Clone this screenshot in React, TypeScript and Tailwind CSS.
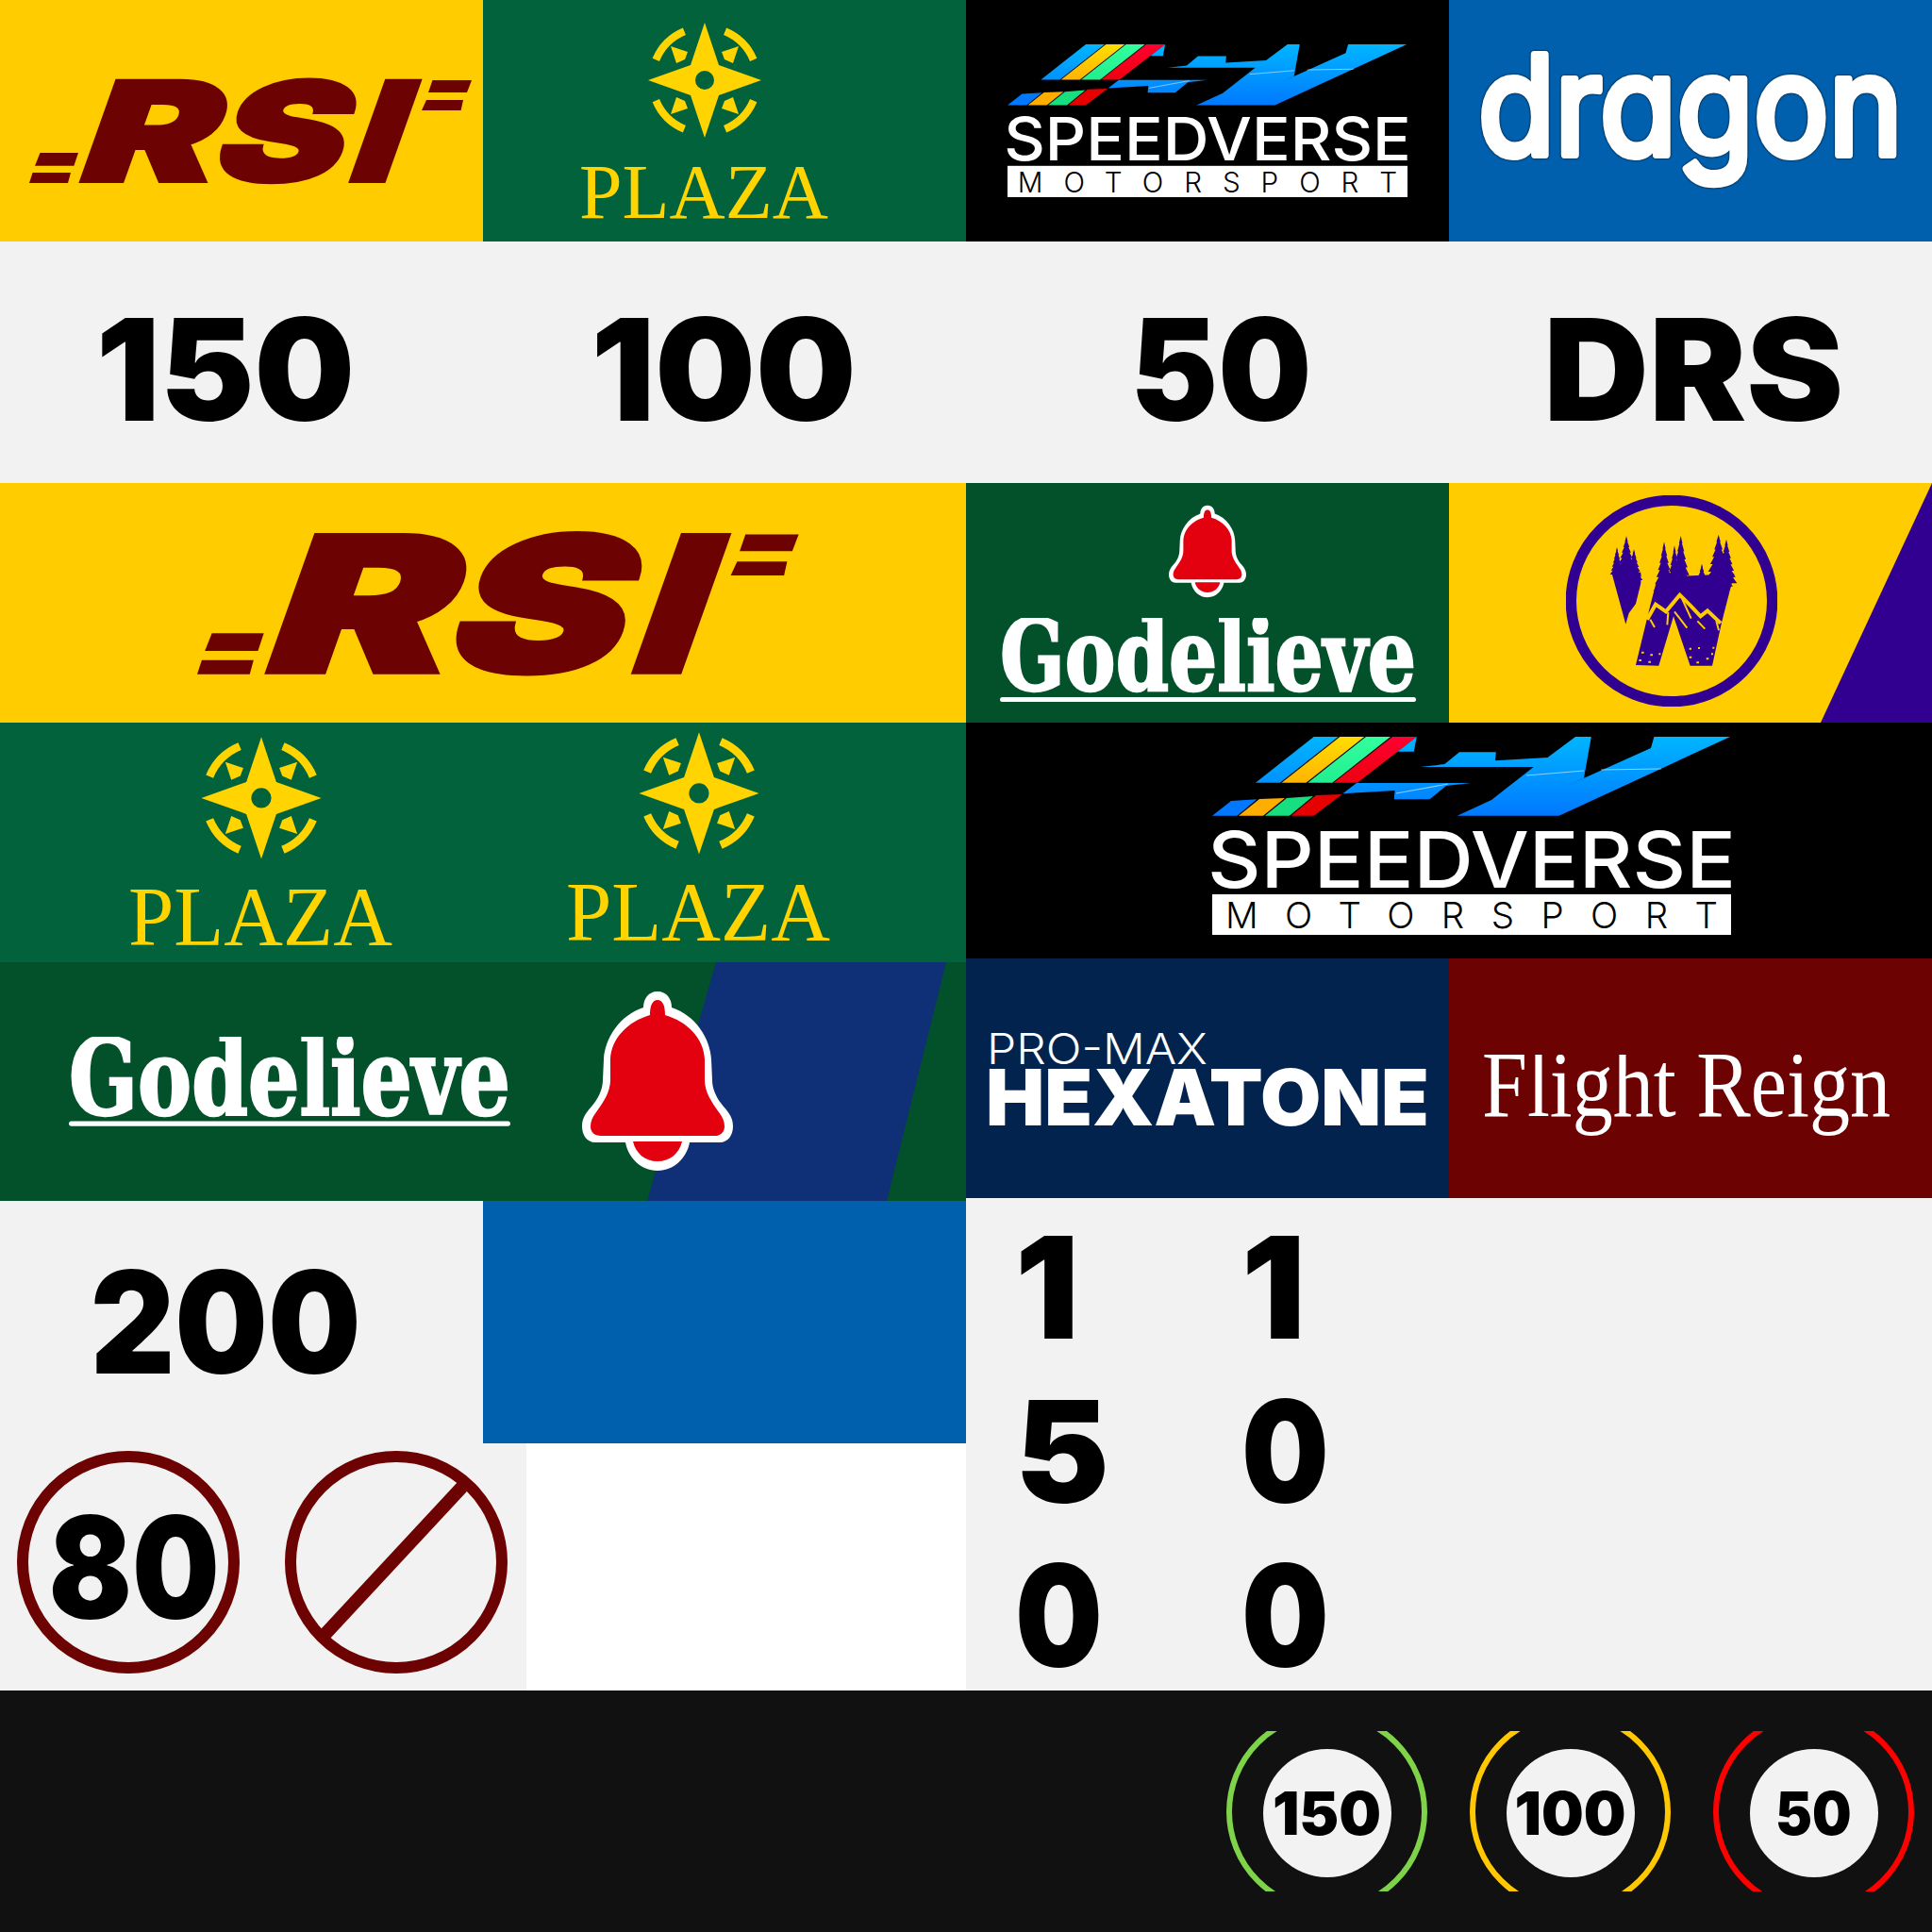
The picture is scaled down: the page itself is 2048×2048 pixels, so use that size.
import React from 'react';

const MAROON = '#6D0202';

const RsiLogo: React.FC<{ className: string }> = ({ className }) => (
  <svg viewBox="0 0 470 110" className={`block overflow-visible ${className}`} fill={MAROON}>
    <polygon points="11.5,78 52,78 47.4,91.7 6,91.7" />
    <polygon points="3.6,99 44,99 41,110 0,110" />
    <polygon points="427.5,1 469,1 464,14 423,14" />
    <polygon points="421,22 460,22 457.6,33 416,33" />
    <g className="font-['Inter',sans-serif] font-black" fontSize="146" stroke={MAROON} strokeWidth="4">
      <text transform="matrix(1 0 -0.355 1 46 108)" textLength="142" lengthAdjust="spacingAndGlyphs">R</text>
      <text transform="matrix(1 0 -0.355 1 188 108)" textLength="136" lengthAdjust="spacingAndGlyphs">S</text>
      <text transform="matrix(1 0 -0.355 1 333 108)" textLength="51" lengthAdjust="spacingAndGlyphs">I</text>
    </g>
  </svg>
);

const Wedge = () => (
  <g>
    <path d="M-51.7 -21.6 A56 56 0 0 1 -21.6 -51.7" fill="none" stroke="#FFD400" strokeWidth="8" />
    <polygon points="-36,-36 -18,-30 -21,-22 -30,-18" fill="#FFD400" />
  </g>
);

const PlazaLogo: React.FC<{ className: string }> = ({ className }) => (
  <svg viewBox="0 0 266 208" className={`block overflow-visible ${className}`}>
    <g transform="translate(133 61)">
      <Wedge />
      <g transform="scale(-1 1)"><Wedge /></g>
      <g transform="scale(1 -1)"><Wedge /></g>
      <g transform="scale(-1 -1)"><Wedge /></g>
      <path
        fillRule="evenodd"
        fill="#FFD400"
        d="M0 -61 L15 -16 L60 0 L15 16 L0 61 L-15 16 L-60 0 L-15 -16 Z M10 0 A10 10 0 1 0 -10 0 A10 10 0 1 0 10 0 Z"
      />
    </g>
    <text
      x="0"
      y="207"
      fontSize="83"
      fill="#FFD400"
      textLength="264"
      lengthAdjust="spacingAndGlyphs"
      className="font-['Liberation_Serif',serif]"
    >
      PLAZA
    </text>
  </svg>
);

const SpeedverseLogo: React.FC<{ className: string }> = ({ className }) => (
  <svg viewBox="0 0 550 210" className={`block overflow-visible ${className}`}>
    <defs>
      <linearGradient id="svBlue" gradientUnits="userSpaceOnUse" x1="0" y1="0" x2="0" y2="84">
        <stop offset="0" stopColor="#00B6FF" />
        <stop offset="1" stopColor="#0078FF" />
      </linearGradient>
      <linearGradient id="svYellow" x1="0" y1="0" x2="0" y2="1">
        <stop offset="0" stopColor="#FFDD00" />
        <stop offset="1" stopColor="#FFB400" />
      </linearGradient>
      <linearGradient id="svGreen" x1="0" y1="0" x2="0" y2="1">
        <stop offset="0" stopColor="#33FF9F" />
        <stop offset="1" stopColor="#22EE90" />
      </linearGradient>
      <linearGradient id="svRed" x1="0" y1="0" x2="0" y2="1">
        <stop offset="0" stopColor="#FF0030" />
        <stop offset="1" stopColor="#EE0010" />
      </linearGradient>
    </defs>
    <polygon points="107.7,0 133.6,0 71.8,48.7 45.9,48.7" fill="url(#svBlue)" />
    <polygon points="135.4,0 161.3,0 99.5,48.7 73.6,48.7" fill="url(#svYellow)" />
    <polygon points="163,0 189,0 127.3,48.7 101.4,48.7" fill="url(#svGreen)" />
    <polygon points="191,0 216.8,0 153.9,48.7 128.7,48.7" fill="url(#svRed)" />
    <polygon points="216.8,0 213.8,15.7 196.4,15.7" fill="url(#svBlue)" />
    <polygon points="0,83.7 20,68 47.4,66.3 26.3,83.7" fill="#0078FF" />
    <polygon points="28,83.7 50,66 77,65 54,83.7" fill="#FFAE00" />
    <polygon points="55.9,83.7 79,65 107,63 81.8,83.7" fill="#17DF80" />
    <polygon points="83.6,83.7 110,62 137.6,61 107.7,83.7" fill="#E60000" />
    <polygon points="138.4,60.3 153,49 274,49 248,52 230.5,66.3 192.8,66.3 193.5,57" fill="url(#svBlue)" />
    <polygon
      points="220.5,32 246.4,29 262,16.3 300.8,16.3 300,25.3 355.5,22 385,0 401.8,0 394,43.7 372,53.7 465,12 468.4,0 549,0 367.7,83.7 259.7,83.7 296,67 340.7,32"
      fill="url(#svBlue)"
    />
    <path d="M333 41 L394 36 M412 35 L476 34 M195 60 L250 50" stroke="#ffffff" strokeOpacity="0.55" strokeWidth="1.2" fill="none" />
    <text
      x="-5"
      y="160"
      fontSize="82"
      fill="#ffffff"
      textLength="560"
      lengthAdjust="spacingAndGlyphs"
      className="font-['Inter',sans-serif] font-medium"
    >
      SPEEDVERSE
    </text>
    <rect y="167" width="550" height="43" fill="#ffffff" />
    <text
      x="14"
      y="203"
      fontSize="38.5"
      fill="#000000"
      textLength="522"
      lengthAdjust="spacing"
      className="font-['Inter',sans-serif] font-light"
    >
      MOTORSPORT
    </text>
  </svg>
);

const Bell: React.FC<{ className: string }> = ({ className }) => (
  <svg viewBox="0 0 160 190" className={`block ${className}`}>
    <path
      fill="#ffffff"
      d="M80 0 C70 0 65 8 65 17 C40 25 24 50 23 72 L22 94 C22 105 16 115 10 122 C3 130 0 135 0 143 C0 152 5 160 14 160 L46 160 C49 176 62 190 80 190 C98 190 111 176 114 160 L146 160 C155 160 160 152 160 143 C160 135 157 130 150 122 C144 115 138 105 138 94 L137 72 C136 50 120 25 95 17 C95 8 90 0 80 0 Z"
    />
    <path
      fill="#E3000F"
      d="M80 9 C75 9 72 14 72 25 C48 32 31 50 30 72 L30 94 C30 106 23 117 15 128 C11 133 9 138 9 143 C9 149 13 153 20 153 L140 153 C147 153 151 149 151 143 C151 138 149 133 145 128 C137 117 130 106 130 94 L130 72 C129 50 112 32 88 25 C88 14 85 9 80 9 Z M54 159 L106 159 C103 172 93 180 80 180 C67 180 57 172 54 159 Z"
    />
  </svg>
);

const GodelieveLogo: React.FC<{ className: string }> = ({ className }) => (
  <svg viewBox="0 0 441 90" className={`block ${className}`}>
    <text
      y="77"
      fontSize="105"
      fill="#ffffff"
      stroke="#ffffff"
      strokeWidth="2.5"
      textLength="441"
      lengthAdjust="spacingAndGlyphs"
      className="font-['DejaVu_Serif',serif] font-bold"
    >
      Godelieve
    </text>
    <rect y="84" width="441" height="5" rx="2.5" fill="#ffffff" />
  </svg>
);

// one jagged spruce, top at (cx, top), widening down to bottom
const spruce = (cx: number, top: number, bottom: number, hw: number) => {
  const steps = 7;
  const right: string[] = [];
  const left: string[] = [];
  for (let i = 1; i <= steps; i++) {
    const y = top + ((bottom - top) * i) / steps;
    const w = (hw * i) / steps;
    right.push(`${cx + w},${y}`, `${cx + w * 0.7},${y}`);
    left.unshift(`${cx - w * 0.7},${y}`, `${cx - w},${y}`);
  }
  return [`${cx},${top}`, ...right, ...left].join(' ');
};

const WILD_TREES: [number, number, number, number][] = [
  [162, 205, 292, 22],
  [192, 170, 292, 34],
  [216, 212, 310, 28],
  [312, 188, 345, 34],
  [345, 200, 345, 30],
  [365, 168, 345, 38],
  [405, 305, 345, 14],
  [432, 258, 345, 24],
  [485, 165, 330, 46],
  [510, 180, 320, 34],
];

const WildLogo = () => (
  <svg viewBox="0 40 672 672" className="relative block w-[224px] h-[224px]">
    <circle cx="336" cy="376" r="320" fill="none" stroke="#310091" strokeWidth="34" />
    <g fill="#310091">
      {WILD_TREES.map((t, i) => (
        <polygon key={i} points={spruce(t[0], t[1], t[2], t[3])} />
      ))}
      <polygon points="145,285 238,285 238,320 222,385 200,415 190,450" />
      <polygon points="285,325 300,300 530,290 535,290 495,445 465,582 395,582 342,425 295,582 222,580 268,390" />
    </g>
    <polyline
      points="258,435 285,387 318,410 362,357 400,395 428,425 450,407 492,447"
      fill="none"
      stroke="#FFCC00"
      strokeWidth="12"
    />
    <path
      d="M268 435 L282 460 M325 412 L322 452 M365 360 L398 432 M345 410 L385 462 M418 440 L442 465 M478 440 L486 470"
      fill="none"
      stroke="#FFCC00"
      strokeWidth="6"
    />
    <path
      d="M240 540 h8 M268 548 h8 M295 545 h6 M232 565 h8 M262 570 h8 M392 528 h7 M420 526 h6 M466 525 h6 M392 555 h8 M415 572 h8 M446 560 h8 M462 545 h6"
      stroke="#FFCC00"
      strokeWidth="6"
      fill="none"
    />
  </svg>
);

const HexatoneLogo = () => (
  <svg viewBox="0 0 462 98" className="block w-[462px] h-[98px] overflow-visible">
    <text
      x="-3"
      y="33"
      fontSize="45"
      fill="#ffffff"
      textLength="234"
      lengthAdjust="spacingAndGlyphs"
      className="font-['Inter',sans-serif] font-light"
    >
      PRO-MAX
    </text>
    <text
      x="-4"
      y="98"
      fontSize="83"
      fill="#ffffff"
      textLength="470"
      lengthAdjust="spacingAndGlyphs"
      className="font-['Inter',sans-serif] font-black"
    >
      HEXATONE
    </text>
  </svg>
);

const FlightLogo = () => (
  <svg viewBox="0 0 433 90" className="block w-[433px] h-[90px]">
    <text
      y="65"
      fontSize="100"
      fill="#ffffff"
      textLength="433"
      lengthAdjust="spacingAndGlyphs"
      className="font-['Liberation_Serif',serif]"
    >
      Flight Reign
    </text>
  </svg>
);

const DragonLogo = () => (
  <svg viewBox="0 0 440 144" className="block w-[440px] h-[144px] overflow-visible drop-shadow-[0_0_1px_#000]">
    <text
      x="-4"
      y="111"
      fontSize="146"
      fill="#ffffff"
      stroke="#ffffff"
      strokeWidth="8"
      strokeLinejoin="round"
      textLength="450"
      lengthAdjust="spacingAndGlyphs"
      className="font-['Inter',sans-serif] font-normal [font-feature-settings:'cv11']"
    >
      dragon
    </text>
  </svg>
);

const Num: React.FC<{ children: React.ReactNode; className?: string }> = ({ children, className }) => (
  <span className={`inline-block font-['Inter',sans-serif] font-black text-[150px] leading-none text-black ${className ?? ''}`}>
    {children}
  </span>
);

const Gauge: React.FC<{ label: string; ring: string; narrow?: boolean }> = ({ label, ring, narrow }) => (
  <div className="relative w-[213px] h-[170px] overflow-hidden flex items-center justify-center">
    <div className={`absolute left-0 top-[-21px] w-[213px] h-[213px] rounded-full border-[6px] ${ring}`} />
    <div className="w-[136px] h-[136px] mt-[4px] rounded-full bg-[#F2F2F2] flex items-center justify-center font-['Inter',sans-serif] font-black text-[63px] leading-none text-black">
      <span className={narrow ? 'inline-block scale-x-[0.93]' : 'inline-block'}>{label}</span>
    </div>
  </div>
);

const NUMBERS = [
  { label: '150', offset: 'mr-[34px]' },
  { label: '100', offset: 'mr-[2px]' },
  { label: '50', offset: 'ml-[28px] scale-x-[0.93]' },
  { label: 'DRS', offset: 'ml-[6px] scale-x-[1.03]' },
];

const DIGITS = [
  { d: '1', cls: '' },
  { d: '1', cls: '' },
  { d: '5', cls: '' },
  { d: '0', cls: 'origin-left scale-x-[0.87]' },
  { d: '0', cls: 'origin-left scale-x-[0.87]' },
  { d: '0', cls: 'origin-left scale-x-[0.87]' },
];

const App: React.FC = () => {
  return (
    <div className="w-[2048px] h-[2048px] flex flex-col overflow-hidden bg-white">
      {/* logo row */}
      <div className="flex h-[256px]">
        <div className="w-[512px] bg-[#FFCC00] pl-[31px] pt-[84px]">
          <RsiLogo className="w-[470px] h-[110px]" />
        </div>
        <div className="w-[512px] bg-[#02623B] pl-[102px] pt-[24px]">
          <PlazaLogo className="w-[266px] h-[208px]" />
        </div>
        <div className="w-[512px] bg-black pl-[44px] pt-[47px]">
          <SpeedverseLogo className="w-[424px] h-[162px]" />
        </div>
        <div className="w-[512px] bg-[#0160AE] pl-[35px] pt-[53px]">
          <DragonLogo />
        </div>
      </div>

      {/* numbers row */}
      <div className="flex h-[256px] bg-[#F2F2F2] pt-[16px]">
        {NUMBERS.map((n) => (
          <div key={n.label} className="w-[512px] flex items-center justify-center">
            <Num className={n.offset}>{n.label}</Num>
          </div>
        ))}
      </div>

      <div className="flex h-[1280px]">
        <div className="w-[1024px] flex flex-col">
          <div className="h-[254px] bg-[#FFCC00] pl-[209px] pt-[53px]">
            <RsiLogo className="w-[639px] h-[150px]" />
          </div>
          <div className="h-[254px] bg-[#02623B] flex">
            <div className="w-[512px] pl-[136px] pt-[15px]">
              <PlazaLogo className="w-[282px] h-[221px]" />
            </div>
            <div className="w-[512px] pl-[88px] pt-[10px]">
              <PlazaLogo className="w-[282px] h-[221px]" />
            </div>
          </div>
          <div className="relative h-[253px] bg-[#03512A] flex pl-[73px]">
            <div className="absolute inset-0 bg-[#0F3076] [clip-path:polygon(759px_0,1003px_0,940px_100%,686px_100%)]" />
            <GodelieveLogo className="relative w-[468px] h-[96px] mt-[79px]" />
            <Bell className="relative w-[160px] h-[190px] mt-[31px] ml-[76px]" />
          </div>
          <div className="h-[257px] flex">
            <div className="w-[512px] bg-[#F2F2F2] flex items-center justify-center">
              <Num className="mr-[34px] scale-x-[0.925]">200</Num>
            </div>
            <div className="w-[512px] bg-[#0160AE]" />
          </div>
          <div className="h-[262px] flex">
            <div className="w-[558px] bg-[#F2F2F2] flex gap-[48px] pl-[18px] pt-[8px]">
              <div className="w-[236px] h-[236px] rounded-full border-[12px] border-[#6D0202] flex items-center justify-center">
                <Num className="ml-[12px] mt-[12px] scale-x-[0.87]">80</Num>
              </div>
              <svg viewBox="0 0 236 236" className="block w-[236px] h-[236px]">
                <circle cx="118" cy="118" r="112" fill="none" stroke={MAROON} strokeWidth="12" />
                <line x1="188" y1="38" x2="42" y2="195" stroke={MAROON} strokeWidth="14" />
              </svg>
            </div>
            <div className="flex-1 bg-white" />
          </div>
        </div>

        <div className="w-[1024px] flex flex-col">
          <div className="h-[254px] shrink-0 flex">
            <div className="w-[512px] bg-[#03512A] flex flex-col items-center pt-[23px] gap-[21px]">
              <Bell className="w-[82px] h-[99px]" />
              <GodelieveLogo className="w-[441px] h-[90px]" />
            </div>
            <div className="relative w-[512px] bg-[#FFCC00] pl-[124px] pt-[13px]">
              <div className="absolute inset-0 bg-[#310091] [clip-path:polygon(100%_0,100%_100%,394px_100%)]" />
              <WildLogo />
            </div>
          </div>
          <div className="h-[250px] shrink-0 bg-black pl-[261px] pt-[15px]">
            <SpeedverseLogo className="w-[550px] h-[210px]" />
          </div>
          <div className="h-[254px] shrink-0 flex">
            <div className="w-[512px] bg-[#02234D] pl-[25px] pt-[79px]">
              <HexatoneLogo />
            </div>
            <div className="w-[512px] bg-[#6D0202] pl-[35px] pt-[102px]">
              <FlightLogo />
            </div>
          </div>
          <div className="flex-1 min-h-0 bg-[#F2F2F2] pl-[52px] pt-[8px]">
            <div className="grid grid-cols-[240px_240px] auto-rows-[174px] w-[480px]">
              {DIGITS.map((item, i) => (
                <div key={i} className="h-[174px] flex items-center">
                  <Num className={`text-[143px] ${item.cls}`}>{item.d}</Num>
                </div>
              ))}
            </div>
          </div>
        </div>
      </div>

      {/* gauges */}
      <div className="h-[256px] bg-[#111111] flex items-center justify-end gap-[45px] pr-[19px]">
        <Gauge label="150" ring="border-[#7ED348]" />
        <Gauge label="100" ring="border-[#FFC800]" />
        <Gauge label="50" ring="border-[#FF0000]" narrow />
      </div>
    </div>
  );
};

export default App;
